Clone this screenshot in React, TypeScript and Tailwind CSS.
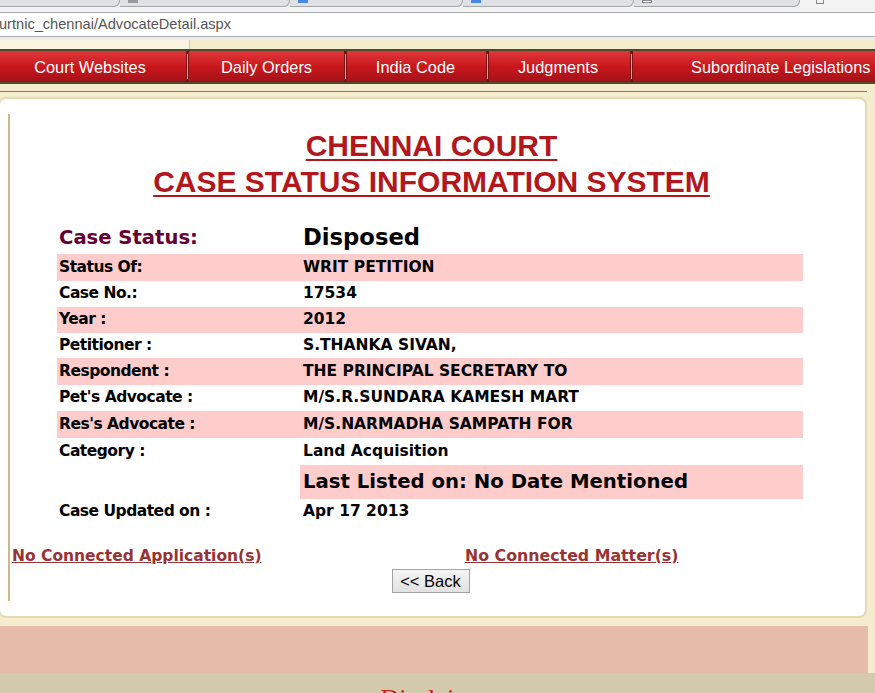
import React from 'react'

const navItems = [
  { label: 'Court Websites', w: 'w-[186px] pr-[6px]' },
  { label: 'Daily Orders', w: 'w-[155px]' },
  { label: 'India Code', w: 'w-[139px] pr-[2px]' },
  { label: 'Judgments', w: 'w-[141px] pr-[3px]' },
]

const rows: { label: string; value: string; pink: boolean; h: string }[] = [
  { label: 'Status Of:', value: 'WRIT PETITION', pink: true, h: 'h-[27px]' },
  { label: 'Case No.:', value: '17534', pink: false, h: 'h-[26px]' },
  { label: 'Year :', value: '2012', pink: true, h: 'h-[26px]' },
  { label: 'Petitioner :', value: 'S.THANKA SIVAN,', pink: false, h: 'h-[25px]' },
  { label: 'Respondent :', value: 'THE PRINCIPAL SECRETARY TO', pink: true, h: 'h-[27px]' },
  { label: "Pet's Advocate :", value: 'M/S.R.SUNDARA KAMESH MART', pink: false, h: 'h-[26px]' },
  { label: "Res's Advocate :", value: 'M/S.NARMADHA SAMPATH FOR', pink: true, h: 'h-[27px]' },
  { label: 'Category :', value: 'Land Acquisition', pink: false, h: 'h-[27px]' },
]

function Separator() {
  return (
    <div className="w-[3px] self-stretch bg-[#7c1212] flex justify-center">
      <div className="w-px my-[3px] bg-[#d99a9a]" />
    </div>
  )
}

function BrowserChrome() {
  const tabs = [
    { w: 'w-[120px]', icon: null },
    { w: 'w-[170px]', icon: 'bg-[#9a9a9a]' },
    { w: 'w-[173px]', icon: 'bg-[#4a86e8]' },
    { w: 'w-[171px]', icon: 'bg-[#4a86e8]' },
    { w: 'w-[166px]', icon: 'bg-white border border-[#888]' },
  ]
  return (
    <div className="h-[40px] flex flex-col">
      <div className="h-[7px] flex bg-[#f3f3f3]">
        {tabs.map((t, i) => (
          <div
            key={i}
            className={`${t.w} h-full bg-[#dfe1e5] border-r border-b border-[#a3a5a8] rounded-br-[6px] pl-[8px]`}
          >
            {t.icon && <div className={`w-[10px] h-[3px] ${t.icon}`} />}
          </div>
        ))}
        <div className="ml-[16px] w-[8px] h-[4px] border border-t-0 border-[#888]" />
      </div>
      <div className="h-[5px] bg-[#f3f3f3]" />
      <div className="h-[25px] bg-white border-y border-[#a9abad] flex items-center pt-[1px] font-['Liberation_Sans'] text-[14.6px] text-[#555] ml-[-1px]">
        urtnic_chennai/AdvocateDetail.aspx
      </div>
      <div className="flex-1 bg-[#ededed]" />
    </div>
  )
}

export default function App() {
  return (
    <div className="w-[875px] h-[693px] overflow-hidden bg-[#f5ecd0] font-['DejaVu_Sans',sans-serif]">
      <BrowserChrome />

      <div className="h-[9px] flex">
        <div className="w-[190px] bg-[#faf5e3] border-r border-[#cfc7ad]" />
        <div className="flex-1 bg-[#f5ecd0]" />
      </div>

      {/* top menu */}
      <nav className="h-[35px] border-t-2 border-b-2 border-[#4d4a2c] bg-gradient-to-b from-[#e0363a] via-[#c9171c] to-[#a31219] flex items-stretch overflow-hidden font-['Liberation_Sans',sans-serif] text-[16.4px] text-white">
        {navItems.map((n) => (
          <React.Fragment key={n.label}>
            <div className={`${n.w} flex items-center justify-center shrink-0 pt-[1px]`}>{n.label}</div>
            <Separator />
          </React.Fragment>
        ))}
        <div className="flex items-center pl-[58px] pt-[1px] whitespace-nowrap">Subordinate Legislations</div>
      </nav>

      <div className="h-[13px] flex flex-col justify-center">
        <div className="h-px mt-[1px] bg-[#8c7d5a] mr-[8px]" />
      </div>

      {/* main card */}
      <div className="ml-[-2px] mr-[8px] h-[521px] bg-white rounded-[8px] border-2 border-[#e3d9b3] pt-[15px]">
        <div className="ml-[8px] h-[487px] border-l-2 border-[#cbb88e] flex flex-col">
          <div className="mt-[14px] text-center font-['Liberation_Sans',sans-serif] font-bold text-[30px] leading-[36px] text-[#b3171c] underline decoration-[2px] underline-offset-[3px] pr-[12px]">
            <div>CHENNAI COURT</div>
            <div>CASE STATUS INFORMATION SYSTEM</div>
          </div>

          <div className="mt-[21px] ml-[47px] w-[746px] font-bold text-black">
            <div className="h-[33px] flex items-center">
              <div className="w-[243px] pl-[2px] text-[19.6px] text-[#660033]">Case Status:</div>
              <div className="pl-[3px] text-[22.7px]">Disposed</div>
            </div>
            {rows.map((r) => (
              <div
                key={r.label}
                className={`${r.h} flex items-center text-[15.5px] ${r.pink ? 'bg-[#ffcccc]' : ''}`}
              >
                <div className="w-[243px] pl-[2px] tracking-[-0.5px]">{r.label}</div>
                <div className="pl-[3px] whitespace-nowrap">{r.value}</div>
              </div>
            ))}
            <div className="h-[34px] flex items-stretch">
              <div className="w-[243px]" />
              <div className="flex-1 bg-[#ffcccc] flex items-center pl-[3px] text-[19.7px]">
                Last Listed on: No Date Mentioned
              </div>
            </div>
            <div className="h-[26px] flex items-center text-[15.5px]">
              <div className="w-[243px] pl-[2px] tracking-[-0.5px]">Case Updated on :</div>
              <div className="pl-[3px]">Apr 17 2013</div>
            </div>
          </div>

          <div className="mt-[21px] flex font-bold text-[#993333] leading-[20px]">
            <a href="#" className="w-[455px] pl-[2px] underline shrink-0 text-[15.5px]">No Connected Application(s)</a>
            <a href="#" className="underline text-[15.8px]">No Connected Matter(s)</a>
          </div>

          <div className="mt-[3px] flex justify-center pr-[14px]">
            <button className="w-[78px] h-[24px] bg-gradient-to-b from-[#f4f4f4] to-[#e2e2e2] border border-[#a3a3a3] font-['Liberation_Sans',sans-serif] text-[16.5px] leading-none text-black">
              &lt;&lt; Back
            </button>
          </div>
        </div>
      </div>

      <div className="h-[7px]" />
      <div className="h-[48px] mr-[7px] bg-[#e5bba9] border-t border-[#f6e8e0]" />
      <div className="h-[20px] bg-[#d3c9ab] pt-[11px] flex justify-center overflow-hidden">
        <div className="font-['Liberation_Serif',serif] text-[26px] leading-[30px] text-[#cc1a1a]">
          Disclaimer
        </div>
      </div>
    </div>
  )
}
